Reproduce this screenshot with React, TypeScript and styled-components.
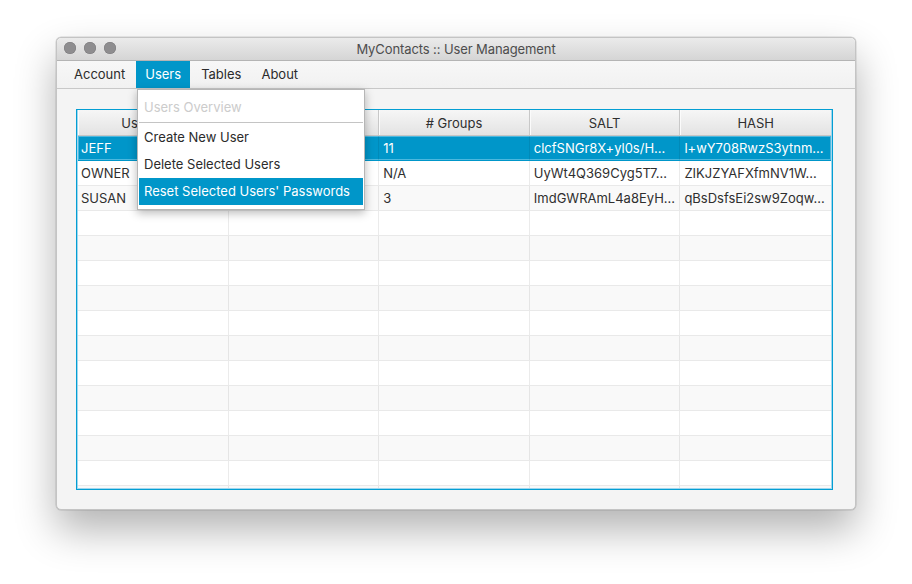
import React from "react";
import styled, { createGlobalStyle } from "styled-components";

const GlobalStyle = createGlobalStyle`
  html, body {
    margin: 0;
    padding: 0;
    background: #ffffff;
  }
  body {
    font-family: Inter, "Liberation Sans", Arial, sans-serif;
    font-size: 13px;
    color: #333333;
  }
`;

type Row = {
  username: string;
  name: string;
  groups: string;
  salt: string;
  hash: string;
};

const rows: Row[] = [
  {
    username: "JEFF",
    name: "",
    groups: "11",
    salt: "clcfSNGr8X+yl0s/H...",
    hash: "l+wY708RwzS3ytnm...",
  },
  {
    username: "OWNER",
    name: "",
    groups: "N/A",
    salt: "UyWt4Q369Cyg5T7...",
    hash: "ZIKJZYAFXfmNV1W...",
  },
  {
    username: "SUSAN",
    name: "",
    groups: "3",
    salt: "ImdGWRAmL4a8EyH...",
    hash: "qBsDsfsEi2sw9Zoqw...",
  },
];

const columns = ["Username", "Display Name", "# Groups", "SALT", "HASH"];
const EMPTY_ROWS = 12;

export default function App() {
  return (
    <>
      <GlobalStyle />
      <Desktop>
        <Window>
          <TitleBar>
            <Lights>
              <Light />
              <Light />
              <Light />
            </Lights>
            <Title>MyContacts :: User Management</Title>
          </TitleBar>

          <MenuBar>
            <MenuItem>Account</MenuItem>
            <MenuItem $open>Users</MenuItem>
            <MenuItem>Tables</MenuItem>
            <MenuItem>About</MenuItem>
          </MenuBar>

          <Content>
            <Table>
              <HeaderRow>
                {columns.map((c) => (
                  <HeaderCell key={c}>{c}</HeaderCell>
                ))}
              </HeaderRow>
              <Body>
                {rows.map((r, i) => (
                  <TableRow key={r.username} $odd={i % 2 === 1} $selected={i === 0}>
                    <Cell>{r.username}</Cell>
                    <Cell>{r.name}</Cell>
                    <Cell>{r.groups}</Cell>
                    <Cell>{r.salt}</Cell>
                    <Cell>{r.hash}</Cell>
                  </TableRow>
                ))}
                {Array.from({ length: EMPTY_ROWS }).map((_, i) => (
                  <TableRow key={"e" + i} $odd={(i + rows.length) % 2 === 1}>
                    {columns.map((c) => (
                      <Cell key={c} />
                    ))}
                  </TableRow>
                ))}
              </Body>
            </Table>
          </Content>

          <Popup>
            <PopupItem $disabled>Users Overview</PopupItem>
            <Separator />
            <PopupItem>Create New User</PopupItem>
            <PopupItem>Delete Selected Users</PopupItem>
            <PopupItem $active>Reset Selected Users' Passwords</PopupItem>
          </Popup>
        </Window>
      </Desktop>
    </>
  );
}

const Desktop = styled.div`
  width: 912px;
  height: 584px;
  box-sizing: border-box;
  padding: 37px 0 0 56px;
  overflow: hidden;
`;

const Window = styled.div`
  position: relative;
  width: 800px;
  height: 473px;
  box-sizing: border-box;
  display: flex;
  flex-direction: column;
  background: #f4f4f4;
  border: 1px solid #c4c4c4;
  border-radius: 5px;
  box-shadow: 0 20px 40px rgba(0, 0, 0, 0.3), 0 0 0 0.5px rgba(0, 0, 0, 0.15);
`;

const TitleBar = styled.div`
  position: relative;
  height: 22px;
  flex: none;
  display: flex;
  align-items: center;
  justify-content: center;
  background: linear-gradient(#ebebeb, #d5d5d5);
  border-bottom: 1px solid #b4b4b4;
  border-radius: 5px 5px 0 0;
`;

const Lights = styled.div`
  position: absolute;
  left: 7px;
  top: 4px;
  display: flex;
  gap: 8px;
`;

const Light = styled.span`
  width: 12px;
  height: 12px;
  border-radius: 50%;
  background: #8e8d8f;
  box-shadow: inset 0 0 0 0.5px #7a797b;
`;

const Title = styled.div`
  font-size: 13px;
  color: #4d4d4d;
  letter-spacing: -0.1px;
`;

const MenuBar = styled.div`
  height: 27px;
  flex: none;
  display: flex;
  align-items: stretch;
  gap: 2px;
  padding-left: 8px;
  background: linear-gradient(#f7f7f7, #f1f1f1);
  border-bottom: 1px solid #c8c8c8;
`;

const MenuItem = styled.div<{ $open?: boolean }>`
  display: flex;
  align-items: center;
  padding: 0 9px 1px;
  font-size: 13px;
  color: ${(p) => (p.$open ? "#ffffff" : "#2b2b2b")};
  background: ${(p) => (p.$open ? "#0096c9" : "transparent")};
`;

const Content = styled.div`
  flex: 1;
  display: flex;
  padding: 20px 22px 19px 19px;
  min-height: 0;
`;

const Table = styled.div`
  flex: 1;
  display: flex;
  flex-direction: column;
  background: #ffffff;
  border: 1px solid #039ed3;
  box-shadow: inset 0 0 0 1px #9fd6ee;
  overflow: hidden;
`;

const HeaderRow = styled.div`
  height: 26px;
  flex: none;
  display: grid;
  grid-template-columns: repeat(5, 1fr);
  margin: 0 1px;
  background: linear-gradient(#f6f6f6, #e3e3e3);
  border-bottom: 1px solid #c5c5c5;
  box-sizing: border-box;
`;

const HeaderCell = styled.div`
  display: flex;
  align-items: center;
  justify-content: center;
  font-size: 13px;
  color: #2f2f2f;
  border-right: 1px solid #c8c8c8;
  box-shadow: inset 1px 0 0 #fbfbfb;
  &:last-child {
    border-right: none;
  }
`;

const Body = styled.div`
  flex: 1;
  margin: 0 1px 1px 1px;
  overflow: hidden;
`;

const TableRow = styled.div<{ $odd?: boolean; $selected?: boolean }>`
  height: 25px;
  display: grid;
  grid-template-columns: repeat(5, 1fr);
  box-sizing: border-box;
  border-bottom: 1px solid ${(p) => (p.$selected ? "#0096c9" : "#e9e9e9")};
  background: ${(p) => (p.$selected ? "#0096c9" : p.$odd ? "#ffffff" : "#f9f9f9")};
  color: ${(p) => (p.$selected ? "#ffffff" : "#2f2f2f")};
  box-shadow: ${(p) => (p.$selected ? "inset 0 0 0 1px #4db8de" : "none")};
`;

const Cell = styled.div`
  display: flex;
  align-items: center;
  padding-left: 4px;
  font-size: 13px;
  white-space: nowrap;
  overflow: hidden;
  border-right: 1px solid rgba(0, 0, 0, 0.08);
  &:first-child {
    padding-left: 3px;
  }
  &:last-child {
    border-right: none;
  }
`;

const Popup = styled.div`
  position: absolute;
  left: 80px;
  top: 51px;
  width: 228px;
  box-sizing: border-box;
  padding: 4px 1px 4px 1px;
  display: flex;
  flex-direction: column;
  background: #ffffff;
  border: 1px solid #b6b6b6;
  box-shadow: 0 3px 9px rgba(0, 0, 0, 0.28);
  z-index: 10;
`;

const PopupItem = styled.div<{ $disabled?: boolean; $active?: boolean }>`
  height: 27px;
  display: flex;
  align-items: center;
  padding: 0 0 1px 5px;
  box-sizing: border-box;
  font-size: 13px;
  white-space: nowrap;
  color: ${(p) => (p.$disabled ? "#cccccc" : p.$active ? "#ffffff" : "#2b2b2b")};
  background: ${(p) => (p.$active ? "#0096c9" : "transparent")};
`;

const Separator = styled.div`
  height: 3px;
  display: flex;
  align-items: center;
  &::after {
    content: "";
    flex: 1;
    height: 1px;
    background: #c4c4c4;
  }
`;
